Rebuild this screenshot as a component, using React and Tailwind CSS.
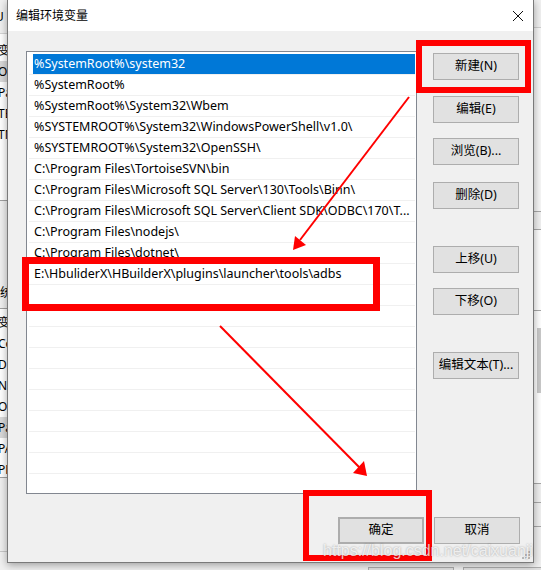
import React from "react";

const paths = [
  "%SystemRoot%\\system32",
  "%SystemRoot%",
  "%SystemRoot%\\System32\\Wbem",
  "%SYSTEMROOT%\\System32\\WindowsPowerShell\\v1.0\\",
  "%SYSTEMROOT%\\System32\\OpenSSH\\",
  "C:\\Program Files\\TortoiseSVN\\bin",
  "C:\\Program Files\\Microsoft SQL Server\\130\\Tools\\Binn\\",
  "C:\\Program Files\\Microsoft SQL Server\\Client SDK\\ODBC\\170\\T...",
  "C:\\Program Files\\nodejs\\",
  "C:\\Program Files\\dotnet\\",
  "E:\\HbuliderX\\HBuilderX\\plugins\\launcher\\tools\\adbs",
];

const rows = [...paths, ...Array(10).fill("")];

const userVars = ["变", "On", "Pa", "TE", "TM"];
const sysVars = ["变", "Co", "Dr", "NU", "OS", "Pa", "PA", "PR"];

function Btn({ children, className = "" }) {
  return (
    <div
      className={`h-[27px] w-[86px] shrink-0 flex items-center justify-center bg-[#e1e1e1] border border-[#adadad] text-[12.5px] text-black ${className}`}
    >
      {children}
    </div>
  );
}

// Edges of the environment-variables window sitting behind the dialog
function BackWindow() {
  return (
    <div className="absolute inset-0 bg-[#f0f0f0]">
      {/* left sliver */}
      <div className="absolute left-0 top-0 w-[8px] h-full overflow-hidden flex flex-col text-[12px] leading-[21px] text-black">
        <div className="h-[33px] flex items-center -ml-[5px]">U</div>
        <div className="h-px bg-[#d4d4d4]" />
        <div className="pt-[6px] bg-white flex flex-col h-[166px]">
          {userVars.map((v, i) => (
            <div
              key={i}
              className={`h-[21px] whitespace-nowrap -ml-[2px] ${i === 1 ? "bg-[#d9d9d9]" : ""}`}
            >
              {v}
            </div>
          ))}
        </div>
        <div className="h-px bg-[#a0a0a0]" />
        <div className="h-[81px]" />
        <div className="h-[21px] -ml-[12px] whitespace-nowrap">系统</div>
        <div className="h-[5px]" />
        <div className="h-px bg-[#a0a0a0]" />
        <div className="bg-white flex flex-col h-[168px] pt-[3px]">
          {sysVars.map((v, i) => (
            <div
              key={i}
              className={`h-[21px] whitespace-nowrap -ml-[2px] ${i === 5 ? "bg-[#d9d9d9]" : ""}`}
            >
              {v}
            </div>
          ))}
        </div>
        <div className="h-px bg-[#a0a0a0]" />
        <div className="h-[73px]" />
        <div className="h-px bg-[#c8c8c8]" />
      </div>

      {/* right sliver */}
      <div className="absolute right-0 top-0 w-[8px] h-full flex flex-col">
        <div className="h-[27px]" />
        <div className="h-px bg-[#cfcfcf]" />
        <div className="h-[183px] border-l border-[#d6d6d6] bg-[#f7f7f7]" />
        <div className="h-px bg-[#a8a8a8]" />
        <div className="h-[17px] border-l border-[#d6d6d6]" />
        <div className="h-px bg-[#a8a8a8]" />
        <div className="h-[80px] border-l border-[#d6d6d6] bg-white" />
        <div className="h-px bg-[#a8a8a8]" />
        <div className="h-[17px] border-l border-[#d6d6d6] bg-white" />
        <div className="h-[65px] border-l border-[#d6d6d6] bg-white flex justify-end">
          <div className="w-[4px] h-full bg-[#c9c9c9]" />
        </div>
        <div className="h-[90px] border-l border-[#d6d6d6] bg-white" />
        <div className="h-px bg-[#a8a8a8]" />
        <div className="h-[18px] border-l border-[#d6d6d6]" />
        <div className="h-px bg-[#a8a8a8]" />
        <div className="h-[23px] border-l border-[#d6d6d6]" />
        <div className="h-px bg-[#a8a8a8]" />
        <div className="flex-1" />
      </div>

      {/* button tops peeking out under the dialog */}
      <div className="absolute left-[368px] top-[567px] w-[86px] h-[10px] border border-[#adadad] bg-[#e1e1e1]" />
      <div className="absolute left-[463px] top-[567px] w-[86px] h-[10px] border border-[#adadad] bg-[#e1e1e1]" />
    </div>
  );
}

function Dialog() {
  return (
    <div className="absolute left-[7px] top-0 w-[527px] h-[563px] border border-t-0 border-[#7a7a7a] bg-[#f0f0f0] shadow-[0_2px_8px_rgba(0,0,0,0.35)] flex flex-col">
      {/* title bar */}
      <div className="h-[31px] bg-white flex items-center justify-between pl-[8px] pr-[9px]">
        <span className="text-[12px] text-black">编辑环境变量</span>
        <svg width="12" height="12" viewBox="0 0 12 12">
          <path d="M1 1 L11 11 M11 1 L1 11" stroke="#111" strokeWidth="1" fill="none" />
        </svg>
      </div>

      {/* body */}
      <div className="flex-1 flex flex-col pl-[18px] pr-[13px] pt-[20px]">
        <div className="flex">
          {/* path list */}
          <div className="w-[391px] h-[443px] border border-[#828790] bg-white overflow-hidden pt-[2px] px-[1px]">
            {rows.map((p, i) => (
              <div key={i} className="h-[21px] ml-[1px] border-b border-[#f0f0f0] pl-[4px]">
                <div
                  className={`h-full pl-[1px] flex items-center whitespace-nowrap text-[12.5px] ${
                    i === 0 ? "bg-[#0078d7] text-white" : "text-black"
                  }`}
                >
                  {p}
                </div>
              </div>
            ))}
          </div>

          {/* action buttons */}
          <div className="ml-[16px] flex flex-col">
            <Btn className="mt-[2px]">新建(N)</Btn>
            <Btn className="mt-[16px]">编辑(E)</Btn>
            <Btn className="mt-[15px]">浏览(B)...</Btn>
            <Btn className="mt-[17px]">删除(D)</Btn>
            <Btn className="mt-[37px]">上移(U)</Btn>
            <Btn className="mt-[15px]">下移(O)</Btn>
            <Btn className="mt-[37px]">编辑文本(T)...</Btn>
          </div>
        </div>

        <div className="mt-[23px] flex justify-end gap-[10px]">
          <Btn className="w-[85px] border-2 border-[#0078d7]">确定</Btn>
          <Btn>取消</Btn>
        </div>
      </div>

      {/* size grip */}
      <svg className="absolute right-[2px] bottom-[2px]" width="10" height="10" viewBox="0 0 10 10">
        <g fill="#b8b8b8">
          <rect x="7" y="1" width="2" height="2" />
          <rect x="4" y="4" width="2" height="2" />
          <rect x="7" y="4" width="2" height="2" />
          <rect x="1" y="7" width="2" height="2" />
          <rect x="4" y="7" width="2" height="2" />
          <rect x="7" y="7" width="2" height="2" />
        </g>
      </svg>
    </div>
  );
}

// Hand-drawn red callouts on top of the dialog
function Markup() {
  return (
    <>
      <div className="absolute left-[416px] top-[40px] w-[115px] h-[53px] border-[6px] border-[#ff0000]" />
      <div className="absolute left-[22px] top-[257px] w-[358px] h-[54px] border-[7px] border-[#ff0000]" />
      <div className="absolute left-[303px] top-[490px] w-[129px] h-[71px] border-[6px] border-[#ff0000]" />
      <svg className="absolute left-0 top-0" width="541" height="570" viewBox="0 0 541 570">
        <line x1="409" y1="97" x2="300" y2="240" stroke="#ff0000" strokeWidth="2" />
        <polygon points="293,250 295,236 306,245" fill="#ff0000" />
        <line x1="220" y1="326" x2="360" y2="468" stroke="#ff0000" strokeWidth="2" />
        <polygon points="367,476 353,473 364,461" fill="#ff0000" />
      </svg>
      <div className="absolute left-[323px] top-[543px] text-[16px] leading-[16px] font-['Liberation_Sans',sans-serif] text-white/75 [text-shadow:0_0_2px_rgba(0,0,0,0.35)] whitespace-nowrap">
        https://blog.csdn.net/caixuanji
      </div>
    </>
  );
}

export default function App() {
  return (
    <div className="relative w-[541px] h-[570px] overflow-hidden font-['Noto_Sans','Noto_Sans_CJK_SC',sans-serif]">
      <BackWindow />
      <Dialog />
      <Markup />
    </div>
  );
}
